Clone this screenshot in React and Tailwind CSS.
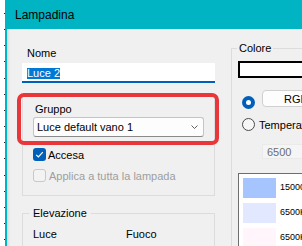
import React from "react";

function Dots() {
  const ys = [];
  for (let k = 0; k < 16; k++) ys.push(Math.round(12.7 + 16.2 * k));
  return (
    <svg width="5" height="246" className="block">
      {ys.map((y) => (
        <rect key={y} x="4" y={y} width="1" height="1" fill="#222" />
      ))}
    </svg>
  );
}

export default function App() {
  return (
    <div className="relative w-[302px] h-[246px] overflow-hidden flex bg-white text-black font-['Liberation_Sans',Arial,sans-serif] text-[11px]">
      <div className="w-[5px] shrink-0">
        <Dots />
      </div>
      <div className="flex-1 min-w-0 flex flex-col border-l-2 border-[#00B4C4]">
        <div className="h-[29px] shrink-0 bg-[#00B4C4] flex items-center pl-[8px] text-[12px]">
          Lampadina
        </div>
        <div className="flex-1 bg-[#F0F0F0] flex pl-[15px] gap-[16px] shadow-[inset_3px_0_3px_-2px_rgba(0,0,0,0.15)]">
          {/* Left column */}
          <div className="w-[193px] shrink-0 flex flex-col">
            <div className="mt-[17px] ml-[5px] leading-[14px]">Nome</div>
            <div className="mt-[3px] h-[20px] bg-white border-b-2 border-[#005FB8] flex items-center pl-[5px] pt-[2px]">
              <span className="inline-block h-[11px] leading-[11px] bg-[#0078D4] text-white">Luce 2</span>
            </div>
            <div className="mt-[12px] border border-[#DCDCDC] px-[10px] pt-[6px] pb-[13px] flex flex-col">
              <div className="ml-[2px] leading-[14px]">Gruppo</div>
              <div className="mt-[1px] h-[20px] bg-[#FDFDFD] border border-[#C4C4C4] border-b-[#8A8A8A] rounded-[3px] flex items-center justify-between pl-[3px] pr-[5px] leading-[14px]">
                <span>Luce default vano 1</span>
                <svg width="7" height="4" viewBox="0 0 7 4">
                  <polyline points="0.5,0.5 3.5,3.5 6.5,0.5" fill="none" stroke="#5F5F5F" strokeWidth="1" />
                </svg>
              </div>
              <div className="mt-[11px] h-[13px] flex items-center gap-[2px] leading-[14px]">
                <div className="w-[13px] h-[13px] rounded-[3px] bg-[#005FB8] flex items-center justify-center">
                  <svg width="13" height="13" viewBox="0 0 13 13">
                    <path d="M3.2 6.8 L5.4 9 L9.8 4.2" fill="none" stroke="white" strokeWidth="1.2" />
                  </svg>
                </div>
                <span>Accesa</span>
              </div>
              <div className="mt-[8px] h-[13px] flex items-center gap-[3px] leading-[14px] text-[#9E9E9E]">
                <div className="w-[13px] h-[13px] rounded-[3px] border border-[#C8C8C8] bg-[#F3F3F3]" />
                <span className="whitespace-nowrap">Applica a tutta la lampada</span>
              </div>
            </div>
            <fieldset className="mt-[10px] border border-[#DCDCDC] p-0 m-0 flex-1">
              <legend className="ml-[6px] px-[4px] leading-[14px]">Elevazione</legend>
              <div className="flex pl-[10px] mt-[7px] leading-[14px]">
                <div className="w-[93px]">Luce</div>
                <div>Fuoco</div>
              </div>
            </fieldset>
          </div>
          {/* Right column */}
          <div className="w-[120px] shrink-0 flex flex-col">
            <fieldset className="mt-[12px] border border-[#DCDCDC] p-0 m-0 flex-1">
              <legend className="ml-[5px] px-[2px] leading-[14px]">Colore</legend>
              <div className="pl-[6px] flex flex-col">
                <div className="mt-[6px] h-[17px] border-2 border-black bg-white" />
                <div className="mt-[12px] flex items-start">
                  <div className="ml-[4px] mt-[6px] w-[13px] h-[13px] rounded-full bg-[#005FB8] flex items-center justify-center shrink-0">
                    <div className="w-[5px] h-[5px] rounded-full bg-white" />
                  </div>
                  <div className="ml-[7px] h-[17px] w-[90px] border border-[#D0D0D0] bg-[#FDFDFD] rounded-[4px] flex items-center pl-[21px] leading-[14px]">
                    RGB
                  </div>
                </div>
                <div className="mt-[9px] h-[13px] flex items-center">
                  <div className="ml-[4px] w-[13px] h-[13px] rounded-full border border-[#4A4A4A] bg-[#F7F7F7] shrink-0" />
                  <span className="ml-[4px] leading-[14px] whitespace-nowrap">Temperatura</span>
                </div>
                <div className="mt-[13px] ml-[24px] h-[15px] bg-[#F5F5F5] border border-[#EAEAEA] flex items-center pl-[4px] text-[#6D6D6D] leading-[14px]">
                  6500
                </div>
                <div className="mt-[14px] border border-[#6E6E6E] bg-white pl-[4px] pt-[4px] flex flex-col gap-[5px] h-[90px]">
                  <div className="h-[20px] flex items-center gap-[4px]">
                    <div className="w-[33px] h-full bg-[#A6C5FF]" />
                    <span className="text-[9px]">15000</span>
                  </div>
                  <div className="h-[20px] flex items-center gap-[4px]">
                    <div className="w-[33px] h-full bg-[#E1E8FF]" />
                    <span className="text-[9px]">6500K</span>
                  </div>
                  <div className="h-[20px] flex items-center gap-[4px]">
                    <div className="w-[33px] h-full bg-[#FFF5FA]" />
                    <span className="text-[9px]">6500K</span>
                  </div>
                </div>
              </div>
            </fieldset>
          </div>
        </div>
      </div>
      <div className="absolute left-[17px] top-[93px] w-[202px] h-[52px] border-4 border-[#E8363A] rounded-[7px] pointer-events-none" />
    </div>
  );
}
